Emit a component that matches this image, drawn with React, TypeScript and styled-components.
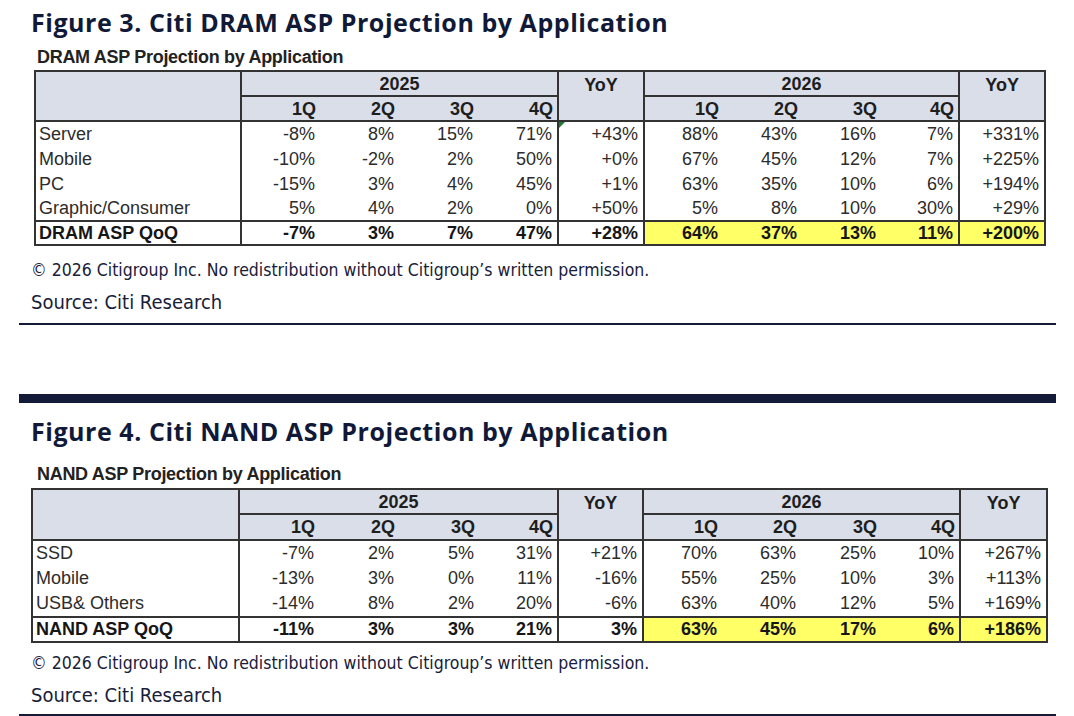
import React from "react";
import styled, { createGlobalStyle } from "styled-components";

const GlobalStyle = createGlobalStyle`
  body {
    margin: 0;
    background: #ffffff;
  }
`;

type Row = { label: string; values: string[] };

type FigureData = {
  title: string;
  subtitle: string;
  rows: Row[];
  total: Row;
  cols: number[];
  tableLeft: number;
  titleTop: number;
  titleGap: number;
  tableGap: number;
  noteGap: number;
  headHeights: [number, number];
  rowHeight: number;
  totalHeight: number;
  flag?: boolean;
};

const dram: FigureData = {
  title: "Figure 3. Citi DRAM ASP Projection by Application",
  subtitle: "DRAM ASP Projection by Application",
  rows: [
    { label: "Server", values: ["-8%", "8%", "15%", "71%", "+43%", "88%", "43%", "16%", "7%", "+331%"] },
    { label: "Mobile", values: ["-10%", "-2%", "2%", "50%", "+0%", "67%", "45%", "12%", "7%", "+225%"] },
    { label: "PC", values: ["-15%", "3%", "4%", "45%", "+1%", "63%", "35%", "10%", "6%", "+194%"] },
    { label: "Graphic/Consumer", values: ["5%", "4%", "2%", "0%", "+50%", "5%", "8%", "10%", "30%", "+29%"] },
  ],
  total: { label: "DRAM ASP QoQ", values: ["-7%", "3%", "7%", "47%", "+28%", "64%", "37%", "13%", "11%", "+200%"] },
  cols: [206, 79, 79, 79, 80, 86, 79, 79, 79, 78, 86],
  tableLeft: 34,
  titleTop: 6,
  titleGap: 8,
  tableGap: 3,
  noteGap: 13,
  headHeights: [25, 25],
  rowHeight: 25,
  totalHeight: 22,
  flag: true,
};

const nand: FigureData = {
  title: "Figure 4. Citi NAND ASP Projection by Application",
  subtitle: "NAND ASP Projection by Application",
  rows: [
    { label: "SSD", values: ["-7%", "2%", "5%", "31%", "+21%", "70%", "63%", "25%", "10%", "+267%"] },
    { label: "Mobile", values: ["-13%", "3%", "0%", "11%", "-16%", "55%", "25%", "10%", "3%", "+113%"] },
    { label: "USB& Others", values: ["-14%", "8%", "2%", "20%", "-6%", "63%", "40%", "12%", "5%", "+169%"] },
  ],
  total: { label: "NAND ASP QoQ", values: ["-11%", "3%", "3%", "21%", "3%", "63%", "45%", "17%", "6%", "+186%"] },
  cols: [207, 80, 80, 80, 79, 85, 79, 79, 80, 79, 87],
  tableLeft: 31,
  titleTop: 12,
  titleGap: 16,
  tableGap: 4,
  noteGap: 9,
  headHeights: [25, 26],
  rowHeight: 25.5,
  totalHeight: 25,
};

const LINE = "2px solid #333333";
const groupStart = [0, 4, 5, 9];

const Page = styled.div`
  width: 1037px;
  padding: 0 18px 0 19px;
  color: #111a36;
`;

const Figure = styled.section`
  display: flex;
  flex-direction: column;
  align-items: flex-start;
  padding-left: 12px;
`;

const Title = styled.h2<{ $top: number }>`
  margin: ${(p) => p.$top}px 0 0;
  font-family: "Open Sans", "Noto Sans", sans-serif;
  font-weight: 700;
  font-size: 25px;
  line-height: 33px;
  letter-spacing: 0.55px;
  color: #101a38;
`;

const Subtitle = styled.div<{ $gap: number }>`
  margin-top: ${(p) => p.$gap}px;
  padding-left: 6px;
  font-family: "Liberation Sans", Arial, sans-serif;
  font-weight: 700;
  font-size: 18px;
  line-height: 20px;
  letter-spacing: -0.3px;
  color: #222222;
`;

const Table = styled.table<{ $left: number; $gap: number; $width: number }>`
  width: ${(p) => p.$width}px;
  margin: ${(p) => p.$gap}px 0 0 ${(p) => p.$left - 31}px;
  border-collapse: collapse;
  table-layout: fixed;
  border: ${LINE};
  font-family: "Liberation Sans", Arial, sans-serif;
  font-size: 18px;
  color: #2c2c2c;
`;

const HeadRow = styled.tr<{ $h: number }>`
  height: ${(p) => p.$h}px;
`;

const HeadCell = styled.th<{ $align?: string; $top?: boolean; $left?: boolean; $under?: boolean }>`
  padding: ${(p) => (p.$top ? "2px 4px 0" : "0 4px")};
  background: #d9dee9;
  font-weight: 700;
  color: #1e1e1e;
  text-align: ${(p) => p.$align || "right"};
  vertical-align: ${(p) => (p.$top ? "top" : "middle")};
  border-left: ${(p) => (p.$left ? LINE : "none")};
  border-bottom: ${(p) => (p.$under ? LINE : "none")};
  line-height: 22px;
`;

const BodyRow = styled.tr<{ $h: number; $total?: boolean }>`
  height: ${(p) => p.$h}px;
  font-weight: ${(p) => (p.$total ? 700 : 400)};
  color: ${(p) => (p.$total ? "#161616" : "#2c2c2c")};
  & > td {
    border-top: ${(p) => (p.$total ? LINE : "none")};
  }
`;

const Cell = styled.td<{ $left?: boolean; $hi?: boolean; $label?: boolean }>`
  position: relative;
  padding: ${(p) => (p.$label ? "0 0 0 3px" : "0 5px 0 0")};
  text-align: ${(p) => (p.$label ? "left" : "right")};
  border-left: ${(p) => (p.$left ? LINE : "none")};
  background: ${(p) => (p.$hi ? "#ffff66" : "transparent")};
  line-height: 22px;
  white-space: nowrap;
`;

const Flag = styled.span`
  position: absolute;
  top: 0;
  left: 0;
  width: 0;
  height: 0;
  border-top: 6px solid #1f7a30;
  border-right: 6px solid transparent;
`;

const Note = styled.div<{ $gap: number }>`
  margin-top: ${(p) => p.$gap}px;
  font-family: "Liberation Sans Narrow", "DejaVu Sans Condensed", Roboto, sans-serif;
  font-size: 17.5px;
  line-height: 22px;
  color: #18203a;
`;

const Source = styled.div`
  margin-top: 8px;
  font-family: "Liberation Sans Narrow", "DejaVu Sans Condensed", Roboto, sans-serif;
  font-size: 20px;
  line-height: 26px;
  color: #18203a;
`;

const Rule = styled.div<{ $thick?: boolean; $gap: number }>`
  margin-top: ${(p) => p.$gap}px;
  height: ${(p) => (p.$thick ? 9 : 2)}px;
  background: #141b38;
`;

function DataTable({ data }: { data: FigureData }) {
  const quarters = ["1Q", "2Q", "3Q", "4Q"];
  const width = data.cols.reduce((a, b) => a + b, 0);
  return (
    <Table $left={data.tableLeft} $gap={data.tableGap} $width={width}>
      <colgroup>
        {data.cols.map((w, i) => (
          <col key={i} style={{ width: w }} />
        ))}
      </colgroup>
      <thead>
        <HeadRow $h={data.headHeights[0]}>
          <HeadCell rowSpan={2} $under />
          <HeadCell colSpan={4} $align="center" $left $under>
            2025
          </HeadCell>
          <HeadCell rowSpan={2} $align="center" $top $left $under>
            YoY
          </HeadCell>
          <HeadCell colSpan={4} $align="center" $left $under>
            2026
          </HeadCell>
          <HeadCell rowSpan={2} $align="center" $top $left $under>
            YoY
          </HeadCell>
        </HeadRow>
        <HeadRow $h={data.headHeights[1]}>
          {quarters.map((q, i) => (
            <HeadCell key={"a" + q} $left={i === 0} $under>
              {q}
            </HeadCell>
          ))}
          {quarters.map((q, i) => (
            <HeadCell key={"b" + q} $left={i === 0} $under>
              {q}
            </HeadCell>
          ))}
        </HeadRow>
      </thead>
      <tbody>
        {data.rows.map((r, ri) => (
          <BodyRow key={r.label} $h={data.rowHeight}>
            <Cell $label>{r.label}</Cell>
            {r.values.map((v, i) => (
              <Cell key={i} $left={groupStart.includes(i)}>
                {data.flag && ri === 0 && i === 4 && <Flag />}
                {v}
              </Cell>
            ))}
          </BodyRow>
        ))}
        <BodyRow $h={data.totalHeight} $total>
          <Cell $label>{data.total.label}</Cell>
          {data.total.values.map((v, i) => (
            <Cell key={i} $left={groupStart.includes(i)} $hi={i >= 5}>
              {v}
            </Cell>
          ))}
        </BodyRow>
      </tbody>
    </Table>
  );
}

function FigureBlock({ data }: { data: FigureData }) {
  return (
    <Figure>
      <Title $top={data.titleTop}>{data.title}</Title>
      <Subtitle $gap={data.titleGap}>{data.subtitle}</Subtitle>
      <DataTable data={data} />
      <Note $gap={data.noteGap}>
        © 2026 Citigroup Inc. No redistribution without Citigroup’s written permission.
      </Note>
      <Source>Source: Citi Research</Source>
    </Figure>
  );
}

export default function App() {
  return (
    <Page>
      <GlobalStyle />
      <FigureBlock data={dram} />
      <Rule $gap={8} />
      <Rule $gap={69} $thick />
      <FigureBlock data={nand} />
      <Rule $gap={6} />
    </Page>
  );
}
